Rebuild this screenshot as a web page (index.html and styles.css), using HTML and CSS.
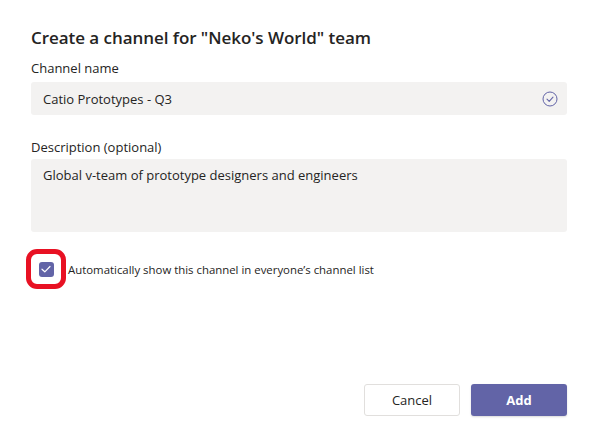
FILE: index.html
```html
<!DOCTYPE html>
<html>
<head>
<meta charset="utf-8">
<link rel="stylesheet" href="styles.css">
</head>
<body>
<div class="dialog">
  <h1 class="title">Create a channel for "Neko's World" team</h1>
  <label class="label">Channel name</label>
  <div class="input">
    <span class="input-text">Catio Prototypes - Q3</span>
    <svg class="check-circle" width="16" height="16" viewBox="0 0 16 16">
      <circle cx="8" cy="8" r="7" fill="none" stroke="#6264a7" stroke-width="1"/>
      <path d="M5 8.2 L7.2 10.3 L11 6.2" fill="none" stroke="#6264a7" stroke-width="1.1" stroke-linecap="round" stroke-linejoin="round"/>
    </svg>
  </div>
  <label class="label label-desc">Description (optional)</label>
  <div class="textarea">Global v-team of prototype designers and engineers</div>
  <div class="check-row">
    <div class="ring">
      <div class="checkbox">
        <svg width="10" height="8" viewBox="0 0 10 8">
          <path d="M1 4.2 L3.8 6.8 L9 1.5" fill="none" stroke="#fff" stroke-width="1.2" stroke-linecap="round" stroke-linejoin="round"/>
        </svg>
      </div>
    </div>
    <span class="check-text">Automatically show this channel in everyone’s channel list</span>
  </div>
  <div class="spacer"></div>
  <div class="actions">
    <button class="btn btn-cancel">Cancel</button>
    <button class="btn btn-add">Add</button>
  </div>
</div>
</body>
</html>
```
FILE: styles.css
```css
html, body {
  margin: 0;
  padding: 0;
  background: #ffffff;
}
body {
  font-family: "Open Sans", "Noto Sans", sans-serif;
  color: #252423;
  width: 598px;
  height: 446px;
  overflow: hidden;
}
.dialog {
  box-sizing: border-box;
  height: 446px;
  padding: 26px 31px 30px 31px;
  display: flex;
  flex-direction: column;
}
.title {
  margin: 0;
  font-size: 17px;
  font-weight: 600;
  line-height: 24px;
  letter-spacing: -0.05px;
}
.label {
  display: block;
  font-size: 13px;
  line-height: 18px;
  margin-top: 9px;
  color: #252423;
}
.label-desc {
  margin-top: 23px;
}
.input {
  margin-top: 5px;
  height: 33px;
  background: #f3f2f1;
  border-radius: 3px;
  display: flex;
  align-items: center;
  justify-content: space-between;
  padding: 0 9px 0 12px;
}
.input-text {
  font-size: 13px;
  color: #252423;
}
.check-circle {
  display: block;
}
.textarea {
  margin-top: 3px;
  height: 73px;
  box-sizing: border-box;
  background: #f3f2f1;
  border-radius: 3px;
  padding: 6px 12px;
  font-size: 13px;
  line-height: 20px;
}
.check-row {
  display: flex;
  align-items: center;
  margin-top: 17px;
  margin-left: -5px;
}
.ring {
  width: 30px;
  height: 30px;
  border: 5px solid #e81123;
  border-radius: 11px;
  display: flex;
  align-items: center;
  justify-content: center;
}
.checkbox {
  width: 15px;
  height: 15px;
  background: #6264a7;
  border-radius: 3px;
  display: flex;
  align-items: center;
  justify-content: center;
}
.checkbox svg {
  display: block;
}
.check-text {
  font-size: 11.4px;
  margin-left: 2px;
  color: #252423;
}
.spacer {
  flex: 1;
}
.actions {
  display: flex;
  justify-content: flex-end;
  gap: 11px;
}
.btn {
  width: 96px;
  height: 32px;
  border-radius: 3px;
  font-family: "Open Sans", "Noto Sans", sans-serif;
  font-size: 13px;
  font-weight: 600;
  cursor: pointer;
}
.btn-cancel {
  background: #ffffff;
  border: 1px solid #e1dfdd;
  color: #252423;
  font-weight: 400;
}
.btn-add {
  background: #6264a7;
  border: none;
  color: #ffffff;
  font-weight: 700;
  box-shadow: 0 1px 2px rgba(0,0,0,0.15);
}
```
